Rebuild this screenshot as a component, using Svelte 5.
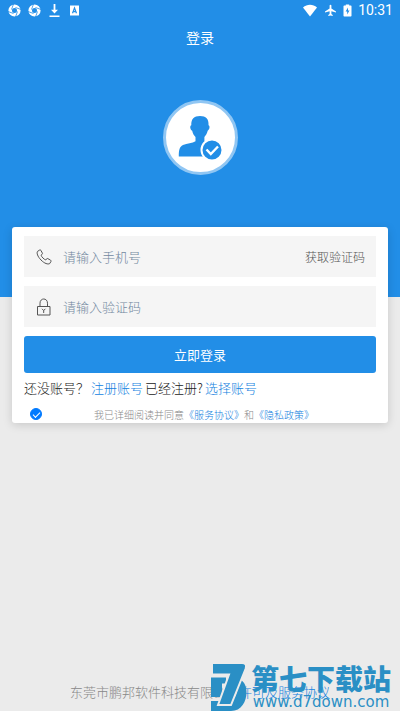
<script>
	let phone = $state('');
	let code = $state('');
	let agreed = $state(true);
</script>

<div class="page">
	<header class="top">
		<div class="status">
			<div class="status_group left">
				{#each [1, 2] as n (n)}
					<svg width="13" height="13" viewBox="0 0 13 13">
						<circle cx="6.5" cy="6.5" r="4.300" fill="none" stroke="#fff" stroke-width="3.600" />
						<g stroke="#228ee7" stroke-width=".8">
							<path d="M3.500 5.500 5.500 0M7.500 3.500 13 5.500M9.500 7.500 7.500 13M5.500 9.500 0 7.500" />
						</g>
					</svg>
				{/each}
				<svg width="13" height="13" viewBox="0 0 13 13">
					<path d="M5.6 0h1.8v5.7h2.6L6.5 9.6 3 5.700h2.600zM1.500 11.5h10v1.5h-10z" fill="#fff" />
				</svg>
				<svg width="13" height="13" viewBox="0 0 13 13">
					<path d="M2 1.500h9v10H2z" fill="#fff" />
					<path d="M4.5 9.3 6.5 4l2 5.3M5.2 7.6h2.6" fill="none" stroke="#228ee7" stroke-width="1.2" />
				</svg>
			</div>
			<div class="status_group">
				<svg width="16" height="13" viewBox="0 0 16 13">
					<path d="M1 3.4C5-0.1 11-0.1 15 3.4L8 12.4z" fill="#fff" />
				</svg>
				<svg width="13" height="13" viewBox="0 0 13 13">
					<path d="M12 8.6V7.4L7.4 4.5V1.6c0-1.2-1.8-1.2-1.8 0v2.9L1 7.4v1.2l4.6-1.4v2.9L4.3 11v1l2.2-.6 2.2.6v-1l-1.3-.9V7.200z" fill="#fff" />
				</svg>
				<svg width="9" height="13" viewBox="0 0 9 13">
					<path d="M1.200 1.500h1.600V.5h3.400v1h1.600q.7 0 .7.700v9.600q0 .7-.7.700H1.200q-.7 0-.7-.7V2.200q0-.7.7-.7z" fill="#fff" />
					<path d="M5 3.500 2.600 7.600h1.600v3l2.300-4.200H5z" fill="#228ee7" />
				</svg>
				<span class="time">10:31</span>
			</div>
		</div>
		<h1>登录</h1>
		<div class="avatar">
			<svg width="69" height="69" viewBox="0 0 69 69">
				<path d="M34 13c6 0 9 3 8.500 9.300 1.500 0 1.500 4.200-.8 5.400-.7 3-2 4.800-3.300 6.200v4.300c2 2.300 5 3 6 4.300 2 1.400 3 4 3 11H12.800c0-6 .5-9.700 4.200-11.500 4-1.400 9.500-2 12.500-3.800v-4.300c-1.500-1.400-2.700-3.300-3.300-6.200-2.300-1-2.500-5-.9-5.400C25 16 28 13 34 13z" fill="#228ee7" />
				<circle cx="46" cy="47" r="10.500" fill="#228ee7" stroke="#fff" stroke-width="2" />
				<path d="M40.500 46.500l4.300 4.500 7.200-7.500" fill="none" stroke="#fff" stroke-width="2.400" />
			</svg>
		</div>
	</header>

	<form class="card" onsubmit={(e) => e.preventDefault()}>
		<div class="field">
			<label for="phone" aria-label="手机号">
				<svg width="16" height="16" viewBox="0 0 16 16">
					<path d="M3.700 1 1.500 2.400C.5 4 1.500 7.400 5 11s7 4.600 8.700 3.600L15 12.400c.2-.5 0-.9-.4-1.200l-2.800-1.600c-.5-.3-1-.1-1.300.3l-.8 1.100c-1.600-.6-4.200-3.200-4.700-4.700l1.100-.9c.4-.3.5-.8.3-1.200L4.900 1.300C4.600.9 4.100.8 3.700 1z" />
				</svg>
			</label>
			<input id="phone" type="tel" placeholder="请输入手机号" bind:value={phone}>
			<button type="button" class="get_code">获取验证码</button>
		</div>
		<div class="field">
			<label for="code" aria-label="验证码">
				<svg width="16" height="18" viewBox="0 0 16 18">
					<path d="M1.500 8.500h12.500v8.500H1.500zM4 8.500V5.200c0-5.600 7.500-5.600 7.500 0v3.300M6 10.800 7.700 12.500l1.700-1.700M7.700 12.300v2.700" />
				</svg>
			</label>
			<input id="code" type="text" placeholder="请输入验证码" bind:value={code}>
		</div>
		<button type="submit" class="submit">立即登录</button>
		<div class="links">
			<span>还没账号？</span>
			<a href="#register">注册账号</a>
			<span>已经注册?</span>
			<a href="#select">选择账号</a>
		</div>
		<div class="agreement">
			<input type="checkbox" id="agree" bind:checked={agreed}>
			<p>
				<label for="agree">我已详细阅读并同意</label><a href="#service">《服务协议》</a>和<a href="#privacy">《隐私政策》</a>
			</p>
		</div>
	</form>

	<footer>东莞市鹏邦软件科技有限公司<a href="#license">许可及服务协议</a></footer>

	<div class="watermark">
		<svg width="36" height="49" viewBox="0 0 36 49">
			<path d="M0 15.500h15v6h-4V35H0zM22 17h4c14 0 13 32-6 32H0V39h17c8 0 12-13 5-13z" fill="#2a8fc5" />
			<path d="M1 1h30q5.500 0 3.500 6L20 43H7L18 12.500H1z" fill="#2a8fc5" stroke="#ebebeb" stroke-width="2" />
		</svg>
		<div class="watermark_text">
			<strong>第七下载站</strong>
			<span>www.d7down.com</span>
		</div>
	</div>
</div>

<style>
	:global(body) {
		margin: 0;
		background: #ebebeb;
	}

	.page {
		position: relative;
		display: flex;
		flex-direction: column;
		min-height: 100vh;
		box-sizing: border-box;
		font-family: "Noto Sans CJK SC", sans-serif;
		font-weight: 300;
		color: #222;
	}

	.page * {
		box-sizing: border-box;
	}

	svg {
		display: block;
		flex: none;
	}

	a {
		color: #1482e0;
		text-decoration: none;
	}

	button,
	input {
		font-family: inherit;
		font-weight: inherit;
		border: 0;
		padding: 0;
		margin: 0;
	}

	button {
		cursor: pointer;
	}

	.top {
		display: flex;
		flex-direction: column;
		align-items: center;
		background: #228ee7;
		color: #fff;
		padding-bottom: 122px;
	}

	.status {
		display: flex;
		justify-content: space-between;
		width: 100%;
		height: 20px;
		padding: 0 7px 0 8px;
	}

	.status_group {
		display: flex;
		align-items: center;
		gap: 6px;
	}

	.left {
		gap: 7px;
	}

	.time {
		font: 400 14px/20px Roboto, sans-serif;
	}

	h1 {
		margin: 0;
		font-size: 14px;
		font-weight: 400;
		line-height: 34px;
	}

	.avatar {
		margin-top: 46px;
		border: 3px solid #90c6f3;
		border-radius: 50%;
		background: #fff;
	}

	.card {
		display: flex;
		flex-direction: column;
		gap: 9px;
		margin: -70px 12px 0;
		padding: 9px 12px 0;
		border-radius: 3px;
		background: #fff;
		box-shadow: 0 2px 10px rgba(0, 0, 0, .15);
	}

	.field {
		display: flex;
		align-items: center;
		height: 41px;
		padding: 0 11px 0 12px;
		background: #f5f5f5;
	}

	.field label {
		width: 27px;
	}

	.field path {
		fill: none;
		stroke: #555;
		stroke-width: 1;
	}

	.field input {
		flex: 1;
		min-width: 0;
		background: none;
		outline: none;
		font-size: 13px;
		color: #333;
	}

	.field input::placeholder {
		color: #7288a0;
	}

	.get_code {
		background: none;
		font-size: 12px;
		color: #555;
	}

	.submit {
		height: 37px;
		border-radius: 3px;
		background: #228ee7;
		font-size: 13px;
		font-weight: 400;
		color: #fff;
	}

	.links {
		display: flex;
		gap: 2px;
		margin-top: -3px;
		font-size: 13px;
		line-height: 18px;
	}

	.agreement {
		display: flex;
		align-items: center;
		height: 18px;
		margin-top: -1px;
		padding-left: 6px;
		font-size: 10px;
		color: #888;
	}

	.agreement p {
		flex: 1;
		margin: 0;
		padding-right: 10px;
		text-align: center;
	}

	.agreement input {
		appearance: none;
		width: 12px;
		height: 12px;
		border: 1px solid #007aff;
		border-radius: 50%;
	}

	.agreement input:checked {
		background: #007aff;
	}

	.agreement input:checked::after {
		content: "";
		display: block;
		width: 6px;
		height: 3px;
		margin: 3px 2px;
		border: solid #fff;
		border-width: 0 0 1px 1px;
		transform: rotate(-45deg);
	}

	footer {
		margin-top: auto;
		padding-bottom: 10px;
		text-align: center;
		font-size: 13px;
		line-height: 18px;
		color: #888;
	}

	/* site mark lies over the footer */
	.watermark {
		position: absolute;
		right: 9px;
		bottom: 0;
		display: flex;
		align-items: flex-end;
		gap: 4px;
		color: #2a8fc5;
		pointer-events: none;
	}

	.watermark_text {
		display: flex;
		flex-direction: column;
		align-items: center;
	}

	.watermark strong {
		font-size: 28px;
		font-weight: 900;
		line-height: 30px;
	}

	.watermark span {
		font: 15px/18px "DejaVu Sans", sans-serif;
	}
</style>
